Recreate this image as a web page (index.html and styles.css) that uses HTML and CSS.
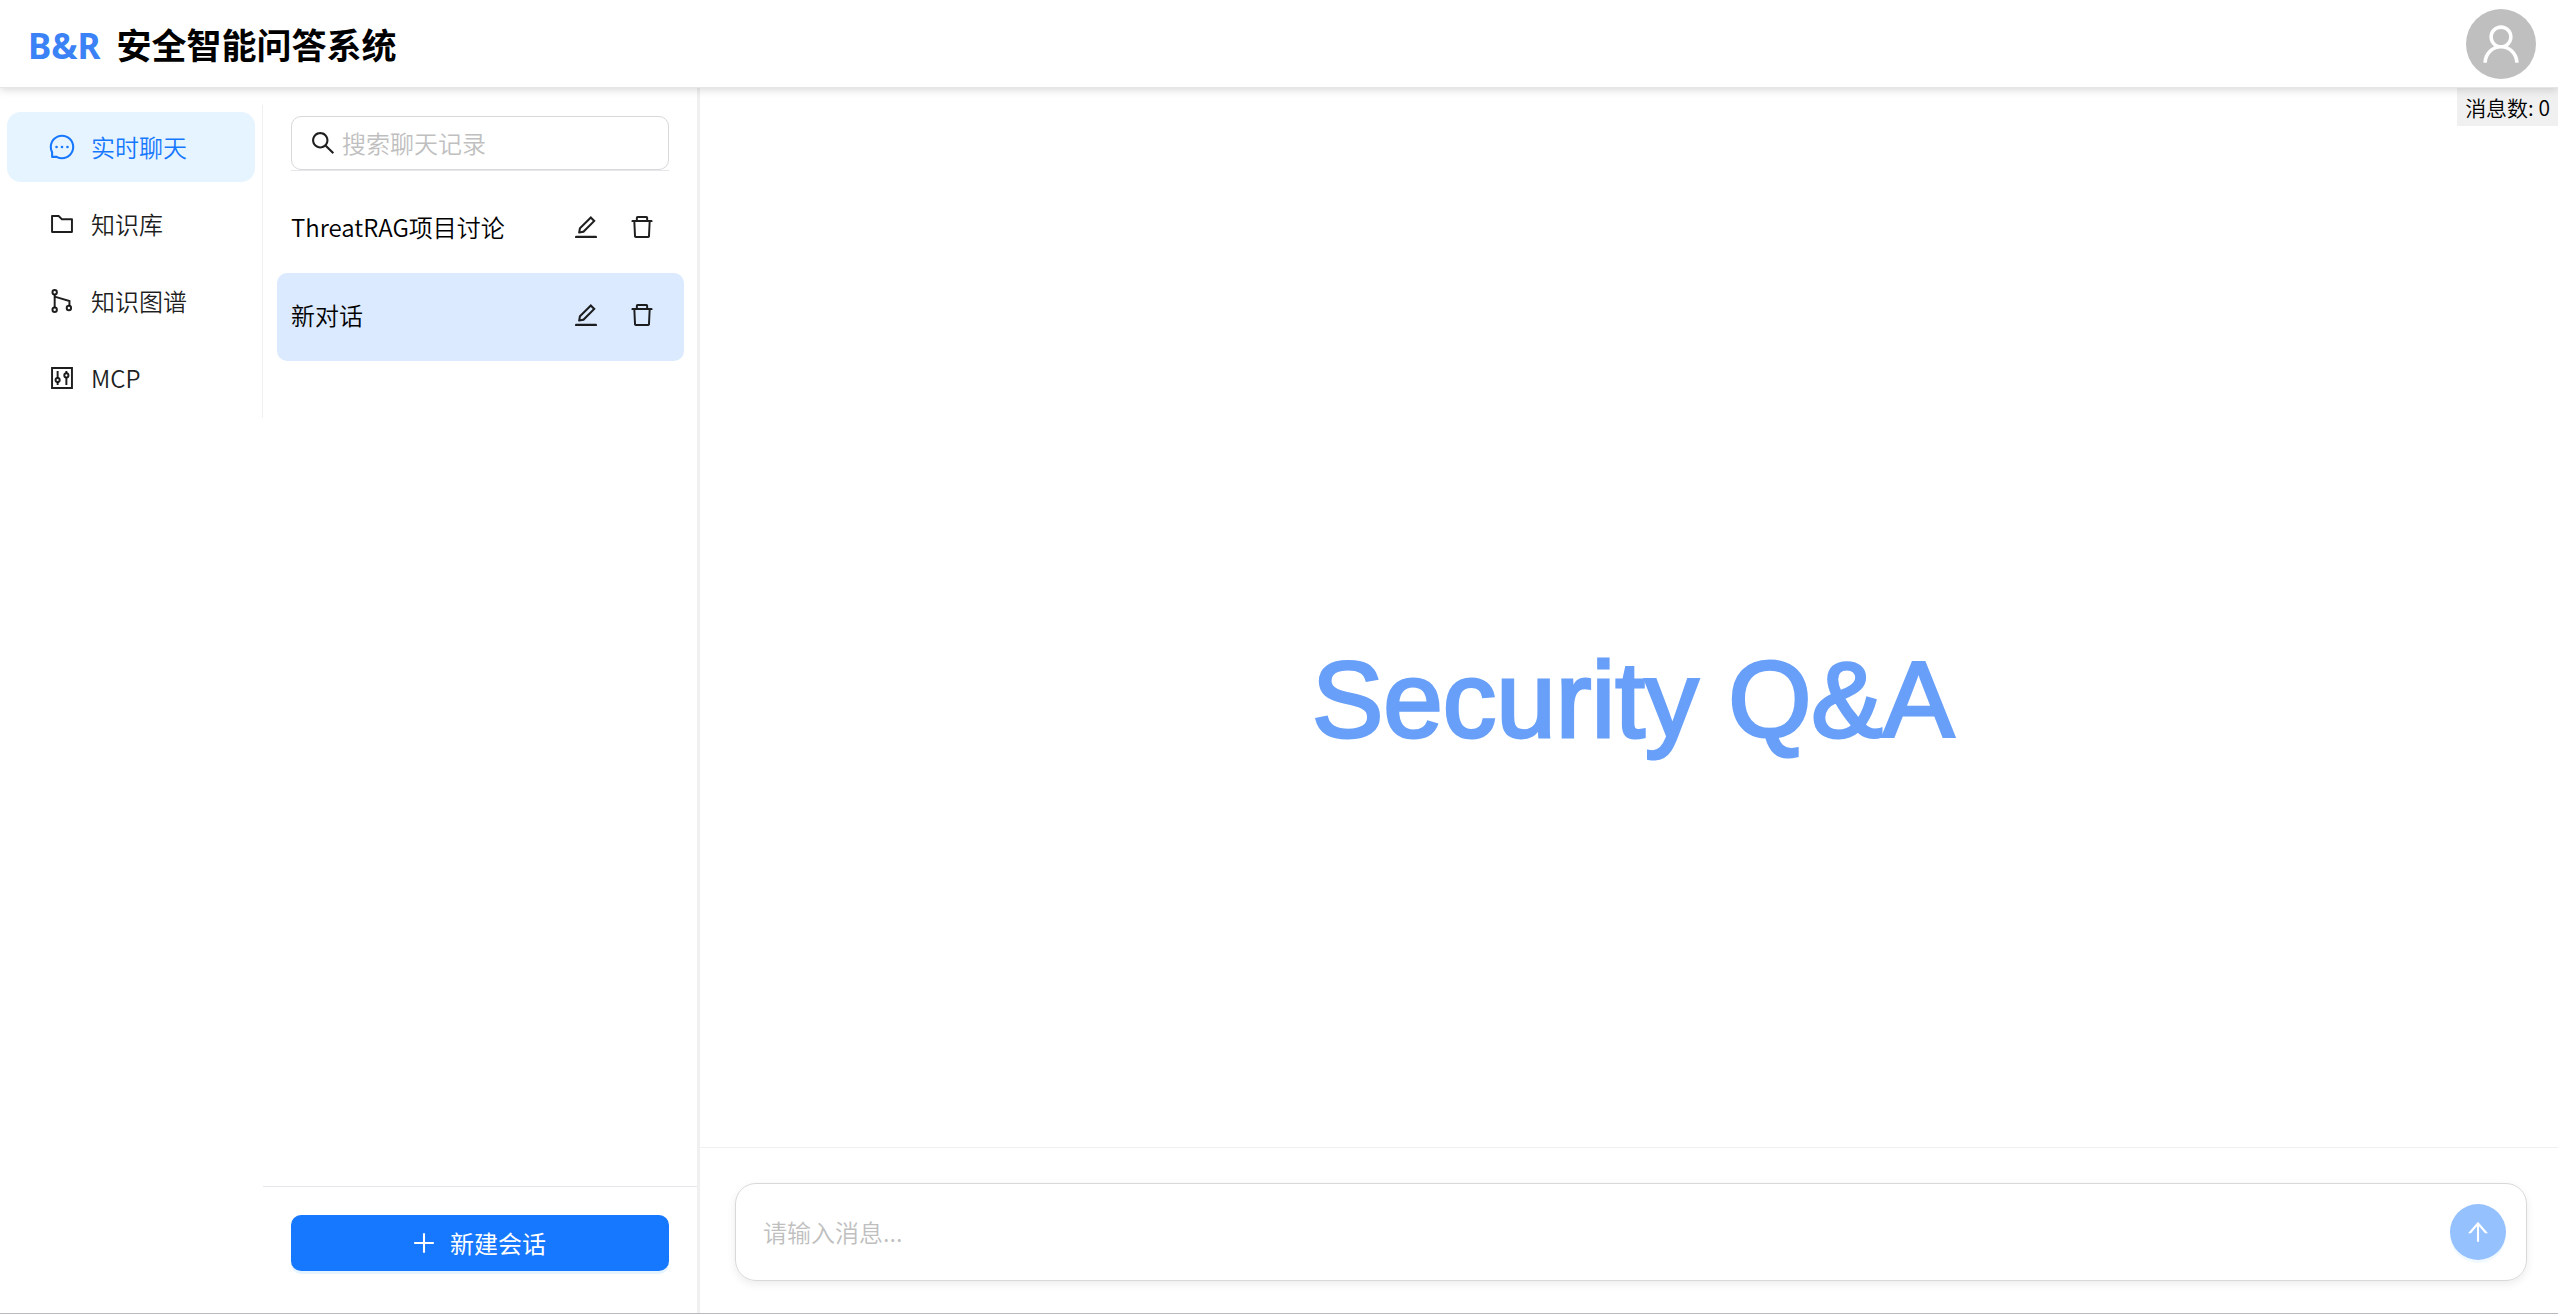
FILE: index.html
```html
<!DOCTYPE html>
<html lang="zh-CN">
<head>
<meta charset="utf-8">
<title>B&amp;R 安全智能问答系统</title>
<link rel="stylesheet" href="styles.css">
</head>
<body>
<svg class="sprite" aria-hidden="true">
  <symbol id="i-message" viewBox="0 0 1024 1024"><path d="M464 512a48 48 0 1096 0 48 48 0 10-96 0zm200 0a48 48 0 1096 0 48 48 0 10-96 0zm-400 0a48 48 0 1096 0 48 48 0 10-96 0zm661.2-173.6c-22.6-53.7-55-101.9-96.3-143.3a444.35 444.35 0 00-143.3-96.3C630.6 75.7 572.2 64 512 64h-2c-60.6.3-119.3 12.3-174.5 35.9a445.35 445.35 0 00-142 96.5c-40.9 41.3-73 89.3-95.2 142.8-23 55.4-34.6 114.3-34.3 174.9A449.4 449.4 0 00112 714v152a46 46 0 0046 46h152.1A449.4 449.4 0 00510 960h2.1c59.9 0 118-11.6 172.7-34.3a444.48 444.48 0 00142.8-95.2c41.3-40.9 73.8-88.7 96.5-142 23.6-55.2 35.6-113.9 35.9-174.5.3-60.9-11.5-120-34.8-175.6zm-151.1 438C704 845.8 611 884 512 884h-1.7c-60.3-.3-120.2-15.3-173.1-43.5l-8.4-4.5H188V695.2l-4.5-8.4C155.3 633.9 140.3 574 140 513.7c-.4-99.7 37.7-193.3 107.6-263.8 69.8-70.5 163.1-109.5 262.8-109.9h1.7c50 0 98.5 9.7 144.2 28.9 44.6 18.7 84.6 45.6 119 80 34.3 34.3 61.3 74.4 80 119 19.4 46.2 29.1 95.2 28.9 145.8-.6 99.6-39.7 192.9-110.1 262.7z"/></symbol>
  <symbol id="i-folder" viewBox="0 0 1024 1024"><path d="M880 298.4H521L403.7 186.2a8.15 8.15 0 00-5.5-2.2H144c-17.7 0-32 14.3-32 32v592c0 17.7 14.3 32 32 32h736c17.7 0 32-14.3 32-32V330.4c0-17.7-14.3-32-32-32zM840 768H184V256h188.5l119.6 114.4H840V768z"/></symbol>
  <symbol id="i-branch" viewBox="0 0 1024 1024"><g fill="none" stroke="currentColor" stroke-width="72"><circle cx="244" cy="192" r="80"/><circle cx="244" cy="832" r="80"/><circle cx="764" cy="768" r="80"/><path d="M244 272v480M244 352l540 160v176"/></g></symbol>
  <symbol id="i-control" viewBox="0 0 1024 1024"><g fill="none" stroke="currentColor" stroke-width="72"><path d="M148 148h728v728H148z"/><circle cx="352" cy="584" r="76"/><circle cx="672" cy="416" r="76"/><path d="M352 260v248M352 660v104M672 260v80M672 492v272"/></g></symbol>
  <symbol id="i-edit" viewBox="0 0 1024 1024"><path d="M257.7 752c2 0 4-.2 6-.5L431.9 722c2-.4 3.9-1.3 5.3-2.8l423.9-423.9a9.96 9.96 0 000-14.1L694.9 114.9c-1.9-1.9-4.4-2.9-7.1-2.9s-5.2 1-7.1 2.9L256.8 538.8c-1.5 1.5-2.4 3.3-2.8 5.3l-29.5 168.2a33.5 33.5 0 009.4 29.8c6.6 6.4 14.9 9.9 23.8 9.9zm67.4-174.4L687.8 215l73.3 73.3-362.7 362.6-88.9 15.7 15.6-89zM880 836H144c-17.7 0-32 14.3-32 32v36c0 4.4 3.6 8 8 8h784c4.4 0 8-3.6 8-8v-36c0-17.7-14.3-32-32-32z"/></symbol>
  <symbol id="i-delete" viewBox="0 0 1024 1024"><path d="M360 184h-8c4.4 0 8-3.6 8-8v8h304v-8c0 4.4 3.6 8 8 8h-8v72h72v-80c0-35.3-28.7-64-64-64H352c-35.3 0-64 28.7-64 64v80h72v-72zm504 72H160c-17.7 0-32 14.3-32 32v32c0 4.4 3.6 8 8 8h60.4l24.7 523c1.6 34.1 29.8 61 63.9 61h454c34.2 0 62.3-26.8 63.9-61l24.7-523H888c4.4 0 8-3.6 8-8v-32c0-17.7-14.3-32-32-32zM731.3 840H292.7l-24.2-512h487l-24.2 512z"/></symbol>
  <symbol id="i-search" viewBox="0 0 1024 1024"><path d="M909.6 854.5L649.9 594.8C690.2 542.7 712 479 712 412c0-80.2-31.3-155.4-87.9-212.1-56.6-56.7-132-87.9-212.1-87.9s-155.5 31.3-212.1 87.9C143.2 256.5 112 331.8 112 412c0 80.1 31.3 155.5 87.9 212.1C256.5 680.8 331.8 712 412 712c67 0 130.6-21.8 182.7-62l259.7 259.6a8.2 8.2 0 0011.6 0l43.6-43.5a8.2 8.2 0 000-11.6zM570.4 570.4C528 612.7 471.8 636 412 636s-116-23.3-158.4-65.6C211.3 528 188 471.8 188 412s23.3-116.1 65.6-158.4C296 211.3 352.2 188 412 188s116.1 23.2 158.4 65.6S636 352.2 636 412s-23.3 116.1-65.6 158.4z"/></symbol>
  <symbol id="i-user" viewBox="0 0 1024 1024"><path d="M858.5 763.6a374 374 0 00-80.6-119.5 375.63 375.63 0 00-119.5-80.6c-.4-.2-.8-.3-1.2-.5C719.5 518 760 444.7 760 362c0-137-111-248-248-248S264 225 264 362c0 82.7 40.5 156 102.8 201.1-.4.2-.8.3-1.2.5-44.8 18.9-85 46-119.5 80.6a375.63 375.63 0 00-80.6 119.5A371.7 371.7 0 00136 901.8a8 8 0 008 8.2h60c4.4 0 7.9-3.5 8-7.8 2-77.2 33-149.5 87.8-204.3 56.7-56.7 132-87.9 212.2-87.9s155.5 31.2 212.2 87.9C779 752.7 810 825 812 902.2c.1 4.4 3.6 7.8 8 7.8h60a8 8 0 008-8.2c-1-47.8-10.9-94.3-29.5-138.2zM512 534c-45.9 0-89.1-17.9-121.6-50.4S340 407.9 340 362c0-45.9 17.9-89.1 50.4-121.6S466.1 190 512 190s89.1 17.9 121.6 50.4S684 316.1 684 362c0 45.9-17.9 89.1-50.4 121.6S557.9 534 512 534z"/></symbol>
  <symbol id="i-plus" viewBox="0 0 1024 1024"><path d="M474 152h76v322h322v76H550v322h-76V550H152v-76h322z"/></symbol>
  <symbol id="i-up" viewBox="0 0 1024 1024"><path d="M868 545.5L536.1 163a31.96 31.96 0 00-48.3 0L156 545.5a7.97 7.97 0 006 13.2h81c4.6 0 9-2 12.1-5.5L474 300.9V864c0 4.4 3.6 8 8 8h60c4.4 0 8-3.6 8-8V300.9l218.9 252.3c3 3.5 7.4 5.5 12.1 5.5h81c6.8 0 10.5-8 6-13.2z"/></symbol>
</svg>

<header class="header">
  <h1 class="brand"><span class="brand-mark">B&amp;R</span>安全智能问答系统</h1>
  <button class="avatar" type="button" aria-label="用户"><svg class="icon icon-user"><use href="#i-user"/></svg></button>
</header>

<div class="layout">
  <nav class="menu">
    <a class="menu-item active" href="#chat"><svg class="icon"><use href="#i-message"/></svg>实时聊天</a>
    <a class="menu-item" href="#kb"><svg class="icon"><use href="#i-folder"/></svg>知识库</a>
    <a class="menu-item" href="#graph"><svg class="icon"><use href="#i-branch"/></svg>知识图谱</a>
    <a class="menu-item" href="#mcp"><svg class="icon"><use href="#i-control"/></svg>MCP</a>
  </nav>

  <aside class="history">
    <div class="search-wrap">
      <label class="search"><svg class="icon"><use href="#i-search"/></svg><input class="search-input" type="text" aria-label="搜索聊天记录" placeholder="搜索聊天记录"></label>
    </div>
    <ul class="sessions">
      <li class="session">
        <span class="session-name">ThreatRAG项目讨论</span>
        <button class="icon-btn" type="button" aria-label="编辑"><svg class="icon"><use href="#i-edit"/></svg></button>
        <button class="icon-btn" type="button" aria-label="删除"><svg class="icon"><use href="#i-delete"/></svg></button>
      </li>
      <li class="session selected">
        <span class="session-name">新对话</span>
        <button class="icon-btn" type="button" aria-label="编辑"><svg class="icon"><use href="#i-edit"/></svg></button>
        <button class="icon-btn" type="button" aria-label="删除"><svg class="icon"><use href="#i-delete"/></svg></button>
      </li>
    </ul>
    <div class="history-foot">
      <button class="new-btn" type="button"><svg class="icon"><use href="#i-plus"/></svg>新建会话</button>
    </div>
  </aside>

  <main class="chat">
    <p class="hero">Security Q&amp;A</p>
    <div class="count">消息数: 0</div>
    <form class="composer">
      <div class="composer-box">
        <input class="composer-input" type="text" aria-label="消息" placeholder="请输入消息...">
        <button class="send" type="button" aria-label="发送"><svg class="icon"><use href="#i-up"/></svg></button>
      </div>
    </form>
  </main>
</div>
</body>
</html>
```
FILE: styles.css
```css
* { box-sizing: border-box; }

body {
  margin: 0;
  height: 100vh;
  display: flex;
  flex-direction: column;
  border-bottom: 1px solid #b8b8c0;
  background: #fff;
  color: #000;
  font-family: "Noto Sans CJK SC", sans-serif;
  font-size: 24px;
  font-weight: 350;
  line-height: 38px;
}

button, input { font: inherit; color: inherit; }
button { border: 0; padding: 0; background: none; cursor: pointer; }

.sprite { display: none; }
.icon { width: 28px; height: 28px; flex: none; fill: currentColor; }

.header {
  display: flex;
  align-items: center;
  justify-content: space-between;
  height: 88px;
  padding: 0 22px 0 28px;
  border-bottom: 1px solid #e5e5e5;
  box-shadow: 0 2px 8px rgba(0, 0, 0, .15);
  position: relative;
  z-index: 1;
}
.brand {
  display: flex;
  gap: 16px;
  margin: 0;
  padding-top: 4px;
  font-family: "Noto Sans", "Noto Sans CJK SC", sans-serif;
  font-size: 35px;
  font-weight: 700;
  line-height: 50px;
}
.brand-mark { color: #3b82f6; }
.avatar {
  display: grid;
  place-items: center;
  width: 70px;
  height: 70px;
  border-radius: 50%;
  background: #bfbfbf;
  color: #fff;
}
.icon-user { width: 48px; height: 48px; }

.layout { flex: 1; min-height: 0; display: flex; }

.menu {
  width: 263px;
  flex: none;
  align-self: flex-start;
  display: flex;
  flex-direction: column;
  gap: 7px;
  margin-top: 17px;
  padding: 7px 7px 5px;
  border-right: 1px solid #f0f0f0;
}
.menu-item {
  display: flex;
  align-items: center;
  gap: 15px;
  height: 70px;
  padding-left: 41px;
  border-radius: 14px;
  color: rgba(0, 0, 0, .88);
  text-decoration: none;
}
.menu-item.active { background: #e6f4ff; color: #1677ff; }

.history {
  width: 437px;
  flex: none;
  display: flex;
  flex-direction: column;
  border-right: 3px solid #f0f0f0;
}
.search-wrap { margin: 28px 28px 14px; border-bottom: 1px solid #e5e7eb; }
.search {
  display: flex;
  align-items: center;
  gap: 5px;
  height: 54px;
  padding: 0 17px;
  border: 1px solid #d9d9d9;
  border-radius: 10px;
  color: rgba(0, 0, 0, .88);
}
.search-input { flex: 1; min-width: 0; border: 0; padding: 0; outline: 0; background: none; }
::placeholder { color: #bfbfbf; opacity: 1; }

.sessions { flex: 1; margin: 0; padding: 0 13px 0 14px; list-style: none; }
.session { display: flex; align-items: center; height: 88px; padding: 0 14px 4px; border-radius: 10px; }
.session.selected { background: #dbeafe; }
.session-name { flex: 1; }
.icon-btn { display: grid; place-items: center; width: 56px; height: 56px; color: rgba(0, 0, 0, .88); }

.history-foot { padding: 28px 28px 42px; border-top: 1px solid #e5e7eb; }
.new-btn {
  display: flex;
  align-items: center;
  justify-content: center;
  gap: 12px;
  width: 100%;
  height: 56px;
  padding-right: 4px;
  border-radius: 10px;
  background: #1677ff;
  box-shadow: 0 3px 0 rgba(5, 145, 255, .1);
  color: #fff;
  font-weight: 400;
}

.chat { flex: 1; min-width: 0; display: grid; grid-template: 1fr auto / 1fr; }
.hero {
  grid-area: 1 / 1 / 3 / 2;
  place-self: center;
  margin: 0;
  padding: 0 0 2px 8px;
  color: #689ff9;
  font-family: "Liberation Sans", Arial, sans-serif;
  font-size: 107px;
  font-weight: 400;
  line-height: 140px;
  -webkit-text-stroke: 3px #689ff9;
}
.count {
  grid-area: 1 / 1;
  place-self: start end;
  padding: 0 8px;
  background: #f0f0f0;
  font-size: 21px;
}
.composer { grid-area: 2 / 1; padding: 35px 31px 32px 35px; border-top: 1px solid #f0f0f0; }
.composer-box {
  display: flex;
  align-items: center;
  height: 98px;
  padding: 0 20px 0 27px;
  border: 1px solid #d9d9d9;
  border-radius: 21px;
  box-shadow: 0 3px 8px rgba(0, 0, 0, .08);
}
.composer-input { flex: 1; min-width: 0; border: 0; padding: 0; outline: 0; background: none; }
.send {
  display: grid;
  place-items: center;
  width: 56px;
  height: 56px;
  border-radius: 50%;
  background: #96c1ff;
  box-shadow: 0 3px 0 rgba(5, 145, 255, .06);
  color: #fff;
}
```
